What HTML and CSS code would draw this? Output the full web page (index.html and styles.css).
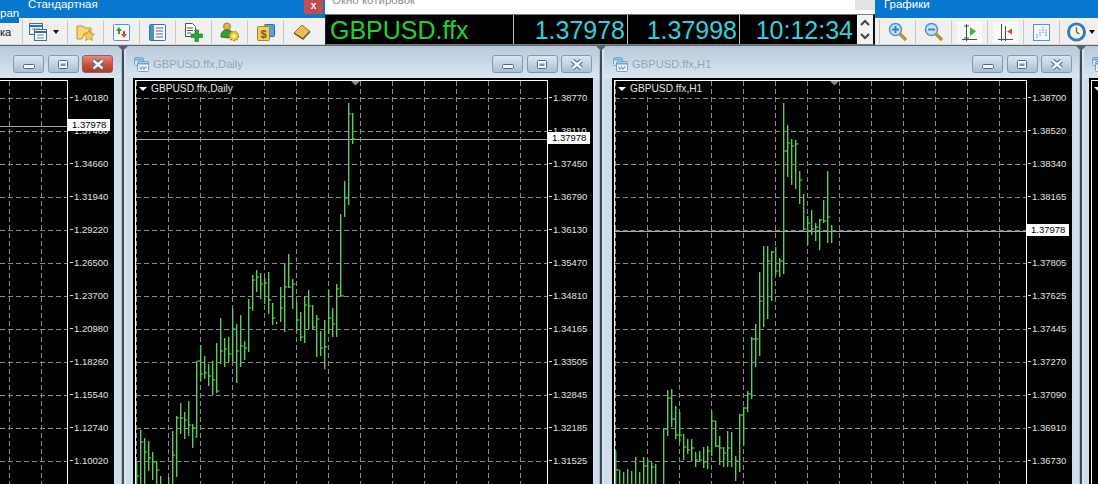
FILE: index.html
```html
<!DOCTYPE html>
<html lang="ru">
<head>
<meta charset="utf-8">
<title>MetaTrader GBPUSD.ffx</title>
<link rel="stylesheet" href="styles.css">
</head>
<body>
<svg class="defs" width="0" height="0" aria-hidden="true">
  <symbol id="win-ico" viewBox="0 0 15 15">
    <rect x=".5" y=".5" width="9" height="8" rx="1" fill="#dbe9f5" stroke="#6fa4cf"/>
    <path d="M1 2.5h8" stroke="#6fa4cf" stroke-width="2"/>
    <rect x="3.5" y="4.5" width="11" height="10" rx="1" fill="#eef5fb" stroke="#6fa4cf"/>
    <path d="M3.5 6.5h11" stroke="#6fa4cf" stroke-width="2"/>
    <path d="M5.5 9.5l1.5 3 1.5-3 1.5 3 1.5-3 1 2" fill="none" stroke="#7a9ab5"/>
  </symbol>
  <symbol id="b-min" viewBox="0 0 30 17">
    <rect x="9.5" y="8.5" width="11" height="4" rx="1" fill="#f2f6fa" stroke="#54677a"/>
  </symbol>
  <symbol id="b-max" viewBox="0 0 30 17">
    <rect x="10.5" y="4.5" width="9" height="8" rx="1" fill="#f2f6fa" stroke="#54677a"/>
    <rect x="12.5" y="7.5" width="5" height="2.5" fill="#7d93a8"/>
  </symbol>
  <symbol id="b-x" viewBox="0 0 30 17">
    <path d="M10.5 4.5l9 8M19.5 4.5l-9 8" stroke="#54677a" stroke-width="4.4"/>
    <path d="M10.5 4.5l9 8M19.5 4.5l-9 8" stroke="#f4f7fa" stroke-width="2.4"/>
  </symbol>
</svg>

<header class="top">
  <section class="bar bar-left">
    <div class="strip">
      <span class="pan">pan</span>
      <span class="strip-title strip-std">Стандартная</span>
      <span class="red-close">x</span>
    </div>
    <div class="tools">
      <span class="tool-stub">ка</span>
      <span class="tool tool-wide">
        <svg width="18" height="18" viewBox="0 0 18 18"><rect x=".5" y=".5" width="13" height="11" fill="#e8f0f8" stroke="#3f6d9c"/><path d="M1 3h12" stroke="#3f6d9c" stroke-width="2"/><rect x="5.5" y="6.5" width="12" height="11" fill="#f6f9fc" stroke="#3f6d9c"/><path d="M6 9h11" stroke="#3f6d9c" stroke-width="2"/><path d="M3 6h8M8 12h7M8 15h7" stroke="#7a8a9a"/></svg>
        <i class="drop"></i>
      </span>
      <span class="tool">
        <svg width="19" height="19" viewBox="0 0 19 19"><path d="M1 3h6l2 2h6v5H9l-3 6H1z" fill="#f3d878" stroke="#b8953a"/><path d="M13 7l1.700 3.600 3.800.5-2.800 2.600.7 3.800-3.400-1.900-3.400 1.900.7-3.800-2.800-2.600 3.800-.5z" fill="#f5cc55" stroke="#b98d2a" stroke-width=".8"/></svg>
      </span>
      <span class="tool">
        <svg width="17" height="17" viewBox="0 0 17 17"><rect x=".5" y=".5" width="16" height="16" rx="1" fill="#f4f8fb" stroke="#5d8fc0"/><path d="M6 3l3 4H7v3H5V7H3z" fill="#2f9e3a"/><path d="M11 14l-3-4h2V7h2v3h2z" fill="#d8483a"/></svg>
      </span>
      <span class="tool">
        <svg width="17" height="17" viewBox="0 0 17 17"><rect x=".5" y=".5" width="16" height="16" rx="1" fill="#f4f8fb" stroke="#3f6d9c"/><rect x="1" y="1" width="4" height="15" fill="#4a8ed0"/><path d="M7 4h7M7 7h7M7 10h7M7 13h7" stroke="#5a6a7a"/></svg>
      </span>
      <span class="tool">
        <svg width="19" height="19" viewBox="0 0 19 19"><path d="M1.500.5h7l3 3v10h-10z" fill="#fff" stroke="#555"/><path d="M3 5h6M3 7.500h6M3 10h4" stroke="#555"/><path d="M11 7h3.500v4H18.500v3.500H14.500v4H11v-4H7v-3.500h4z" fill="#2aa53a" stroke="#17752a" stroke-width=".6"/></svg>
      </span>
      <span class="tool">
        <svg width="20" height="20" viewBox="0 0 20 20"><circle cx="7" cy="4.500" r="3.500" fill="#e9b23c" stroke="#a87c20"/><path d="M1 15c0-5 2-7 6-7s5 2 5 3l-3 5z" fill="#3c9a3c" stroke="#276f27"/><circle cx="14" cy="14" r="4.500" fill="#f0d040" stroke="#a88a20" stroke-width="1.500" stroke-dasharray="2 1"/><circle cx="14" cy="14" r="1.500" fill="#fff6c8"/></svg>
      </span>
      <span class="tool">
        <svg width="18" height="18" viewBox="0 0 18 18"><rect x="7.500" y="1.500" width="10" height="12" rx="1" fill="#5aa0dc" stroke="#2d6ca8"/><rect x=".5" y="3.500" width="12" height="14" rx="1" fill="#f3cc5c" stroke="#a8842a"/><text class="dollar" x="6.500" y="15">$</text></svg>
      </span>
      <span class="tool">
        <svg width="18" height="18" viewBox="0 0 18 18"><path d="M1 10L9 2l8 6.500-7 7.500z" fill="#e8bd52" stroke="#9a7420"/><path d="M1 10l9 6 7-7.500" fill="none" stroke="#6f5414" stroke-width="1.500"/></svg>
      </span>
    </div>
  </section>

  <section class="quote">
    <div class="quote-title"><span>Окно котировок</span><i class="quote-close"></i></div>
    <div class="ticker-row">
      <div class="ticker">
        <span class="cell cell-sym">GBPUSD.ffx</span>
        <span class="cell cell-bid">1.37978</span>
        <span class="cell cell-ask">1.37998</span>
        <span class="cell cell-time">10:12:34</span>
      </div>
      <div class="spin">
        <svg width="10" height="8" viewBox="0 0 10 8"><path d="M1 6l4-4 4 4" fill="none" stroke="#444" stroke-width="2"/></svg>
        <svg width="10" height="8" viewBox="0 0 10 8"><path d="M1 2l4 4 4-4" fill="none" stroke="#444" stroke-width="2"/></svg>
      </div>
    </div>
  </section>

  <section class="bar bar-right">
    <div class="strip"><span class="strip-title strip-charts">Графики</span></div>
    <div class="tools">
      <span class="tool tool-first">
        <svg width="20" height="20" viewBox="0 0 20 20"><path d="M12 12l6 6" stroke="#b8952c" stroke-width="3.400"/><circle cx="7.500" cy="7.500" r="6" fill="#bfe0f5" stroke="#5b8fb8" stroke-width="1.500"/><path d="M4 7.500h7M7.500 4v7" stroke="#3a7fb5" stroke-width="1.800"/></svg>
      </span>
      <span class="tool">
        <svg width="20" height="20" viewBox="0 0 20 20"><path d="M12 12l6 6" stroke="#b8952c" stroke-width="3.400"/><circle cx="7.500" cy="7.500" r="6" fill="#bfe0f5" stroke="#5b8fb8" stroke-width="1.500"/><path d="M4 7.500h7" stroke="#3a7fb5" stroke-width="1.800"/></svg>
      </span>
      <span class="tool">
        <span class="toggled"><svg width="16" height="19" viewBox="0 0 16 19"><path d="M4.500 1v17M0 16.500h15M2 3h5M2 15h5" stroke="#44505c" fill="none"/><path d="M8 4l6 4.500-6 4.500z" fill="#3bb54a"/></svg></span>
      </span>
      <span class="tool">
        <span class="toggled"><svg width="16" height="19" viewBox="0 0 16 19"><path d="M3.500 1v17M7.500 3v15M0 16.500h15" stroke="#44505c" fill="none"/><path d="M9 8.500l5-3v6z" fill="#d84a3a"/></svg></span>
      </span>
      <span class="tool">
        <svg width="17" height="17" viewBox="0 0 17 17"><rect x=".5" y=".5" width="16" height="16" fill="#f4f8fb" stroke="#5d8fc0"/><path d="M4 14V9M7 12V6M10 9V3M13 12V5" stroke="#6a8aa8" stroke-dasharray="1.500 1"/></svg>
      </span>
      <span class="tool tool-clock">
        <svg width="20" height="20" viewBox="0 0 20 20"><circle cx="10" cy="10" r="8.500" fill="#f4f4ee" stroke="#2b7cc0" stroke-width="3"/><path d="M10 5v5l3 2" fill="none" stroke="#6a5a30" stroke-width="1.300"/></svg>
        <i class="drop"></i>
      </span>
    </div>
  </section>
</header>

<main class="mdi">
  <!-- left window -->
  <article class="win win-left">
    <div class="win-title">
      <div class="btns">
        <span class="btn"><svg width="30" height="17"><use href="#b-min"/></svg></span>
        <span class="btn"><svg width="30" height="17"><use href="#b-max"/></svg></span>
        <span class="btn btn-red"><svg width="30" height="17"><use href="#b-x"/></svg></span>
      </div>
    </div>
    <div class="panel panel-left">
      <div class="frame frame-left">
        <svg class="plot" width="67" height="403" viewBox="0 81 67 403">
          <path class="grid" d="M9.500 81V484M41.500 81V484M0 98.500H67M0 131.500H67M0 164.500H67M0 197.500H67M0 230.500H67M0 263.500H67M0 296.500H67M0 329.500H67M0 362.500H67M0 395.500H67M0 428.500H67M0 461.500H67"/>
          <path class="price" d="M0 126.500H67"/>
        </svg>
      </div>
      <div class="axis axis-left">
        <span>1.40180</span><span>1.37460</span><span>1.34660</span><span>1.31940</span><span>1.29220</span><span>1.26500</span><span>1.23700</span><span>1.20980</span><span>1.18260</span><span>1.15540</span><span>1.12740</span><span>1.10020</span>
        <b class="tag tag-left">1.37978</b>
      </div>
    </div>
  </article>
  <div class="split"></div>

  <!-- daily window -->
  <article class="win win-mid">
    <div class="win-title">
      <svg class="win-ico" width="15" height="15"><use href="#win-ico"/></svg>
      <span class="win-name">GBPUSD.ffx,Daily</span>
      <div class="btns">
        <span class="btn"><svg width="30" height="17"><use href="#b-min"/></svg></span>
        <span class="btn"><svg width="30" height="17"><use href="#b-max"/></svg></span>
        <span class="btn"><svg width="30" height="17"><use href="#b-x"/></svg></span>
      </div>
    </div>
    <div class="panel">
      <div class="frame">
        <span class="chart-label"><i class="tri"></i>GBPUSD.ffx,Daily</span>
        <svg class="plot" width="411" height="403" viewBox="136 81 411 403">
          <path class="grid" d="M136.500 81V484M168.500 81V484M200.500 81V484M232.500 81V484M264.500 81V484M296.500 81V484M328.500 81V484M360.500 81V484M392.500 81V484M424.500 81V484M456.500 81V484M488.500 81V484M520.500 81V484M136 98.500H547M136 131.500H547M136 164.500H547M136 197.500H547M136 230.500H547M136 263.500H547M136 296.500H547M136 329.500H547M136 362.500H547M136 395.500H547M136 428.500H547M136 461.500H547"/>
          <path class="marker" d="M351 81h9l-4.500 4.500z"/>
          <path class="price" d="M136 139.500H547"/>
          <path class="bars" d="M136.500 461V484M137 476h2M140.500 430V484M141 442h2M144.500 438V484M145 452h2M148.500 441V471M149 458h2M152.500 452V480M153 462h2M156.500 461V484M157 470h2M160.500 476V484M168.500 477V484M172.500 431V484M173 455h2M176.500 416V477M177 418h2M180.500 403V434M181 418h2M184.500 412V439M185 420h2M188.500 401V436M189 425h2M192.500 424V448M193 428h2M196.500 361V437M195 437h2M197 361h3M200.500 345V381M201 374h2M204.500 356V379M205 373h2M208.500 364V386M209 376h2M212.500 361V395M213 380h2M216.500 343V393M217 391h2M220.500 318V364M221 351h2M224.500 338V367M225 349h2M228.500 337V362M229 354h2M232.500 308V362M233 329h2M236.500 324V383M237 351h2M240.500 315V367M241 346h2M244.500 341V360M245 348h2M248.500 299V352M249 308h2M252.500 275V311M253 280h2M256.500 270V292M257 277h2M260.500 273V299M261 284h2M264.500 278V304M265 283h2M268.500 272V314M269 300h2M272.500 303V325M273 318h2M276.500 322V324M280.500 287V322M281 308h2M284.500 263V332M285 287h2M288.500 254V288M289 287h2M292.500 279V309M293 284h2M296.500 302V331M297 320h2M300.500 312V341M301 337h2M304.500 296V343M305 305h2M308.500 290V329M309 306h2M312.500 305V329M313 327h2M316.500 315V357M317 319h2M320.500 331V356M321 348h2M324.500 320V369M325 347h2M328.500 290V334M329 318h2M332.500 308V337M333 324h2M336.500 284V337M337 289h2M340.500 214V296M341 296h3M344.500 181V217M345 198h2M348.500 103V205M349 114h2M352.500 113V144M353 139h2"/>
        </svg>
      </div>
      <div class="axis">
        <span>1.38770</span><span>1.38110</span><span>1.37450</span><span>1.36790</span><span>1.36130</span><span>1.35470</span><span>1.34810</span><span>1.34165</span><span>1.33505</span><span>1.32845</span><span>1.32185</span><span>1.31525</span>
        <b class="tag tag-mid">1.37978</b>
      </div>
    </div>
  </article>
  <div class="split"></div>

  <!-- H1 window -->
  <article class="win win-right">
    <div class="win-title">
      <svg class="win-ico" width="15" height="15"><use href="#win-ico"/></svg>
      <span class="win-name">GBPUSD.ffx,H1</span>
      <div class="btns">
        <span class="btn"><svg width="30" height="17"><use href="#b-min"/></svg></span>
        <span class="btn"><svg width="30" height="17"><use href="#b-max"/></svg></span>
        <span class="btn"><svg width="30" height="17"><use href="#b-x"/></svg></span>
      </div>
    </div>
    <div class="panel">
      <div class="frame">
        <span class="chart-label"><i class="tri"></i>GBPUSD.ffx,H1</span>
        <svg class="plot" width="411" height="403" viewBox="615 81 411 403">
          <path class="grid" d="M615.500 81V484M647.500 81V484M679.500 81V484M711.500 81V484M743.500 81V484M775.500 81V484M807.500 81V484M839.500 81V484M871.500 81V484M903.500 81V484M935.500 81V484M967.500 81V484M999.500 81V484M615 98.500H1026M615 131.500H1026M615 164.500H1026M615 197.500H1026M615 230.500H1026M615 263.500H1026M615 296.500H1026M615 329.500H1026M615 362.500H1026M615 395.500H1026M615 428.500H1026M615 461.500H1026"/>
          <path class="marker" d="M830 81h9l-4.500 4.500z"/>
          <path class="price" d="M615 231.500H1026"/>
          <path class="bars" d="M615.500 451V484M616 470h3M619.500 470V484M623.500 472V484M627.500 469V484M631.500 471V484M635.500 457V484M639.500 472V484M643.500 457V484M644 466h3M647.500 459V484M651.500 462V484M652 467h2M655.500 464V484M663.500 429V484M664 429h3M667.500 390V436M668 398h3M671.500 389V427M672 419h3M675.500 406V439M676 435h3M679.500 412V442M680 435h2M683.500 434V460M684 447h2M687.500 439V454M688 450h2M691.500 439V461M692 448h2M695.500 452V467M696 460h2M699.500 451V462M700 460h2M703.500 447V468M704 462h2M707.500 446V469M708 451h2M711.500 411V456M712 421h3M715.500 421V447M716 446h3M719.500 436V465M720 448h2M723.500 447V467M724 453h2M727.500 431V467M728 448h2M731.500 432V467M735.500 456V481M736 461h2M739.500 414V472M740 415h3M743.500 407V446M744 408h3M747.500 391V412M748 394h3M751.500 337V399M752 339h3M755.500 324V367M756 339h2M759.500 272V356M760 301h2M763.500 246V327M767.500 246V319M768 261h2M771.500 251V301M772 252h2M775.500 247V275M776 271h2M779.500 258V277M780 261h3M783.500 103V274M784 151h3M787.500 125V177M788 143h2M791.500 139V185M792 146h2M795.500 140V189M796 144h2M799.500 171V204M800 180h2M803.500 194V230M804 229h2M807.500 216V245M808 223h2M811.500 210V235M812 229h2M815.500 223V241M816 227h2M819.500 219V250M820 220h2M823.500 200V223M824 221h2M827.500 171V243M828 217h2M831.500 225V243"/>
        </svg>
      </div>
      <div class="axis">
        <span>1.38700</span><span>1.38520</span><span>1.38340</span><span>1.38165</span><span>1.37985</span><span>1.37805</span><span>1.37625</span><span>1.37445</span><span>1.37270</span><span>1.37090</span><span>1.36910</span><span>1.36730</span>
        <b class="tag tag-right">1.37978</b>
      </div>
    </div>
  </article>
  <div class="split"></div>

  <!-- far right window, cut by the screen edge -->
  <article class="win win-far">
    <div class="win-title"><svg class="win-ico" width="15" height="15"><use href="#win-ico"/></svg></div>
    <div class="panel panel-far">
      <div class="frame frame-far"><i class="tri"></i></div>
    </div>
  </article>
</main>
</body>
</html>
```

FILE: styles.css
```css
* { box-sizing: border-box; }
html, body { margin: 0; height: 100%; }
body {
  width: 1098px;
  height: 484px;
  overflow: hidden;
  background: #c9d7e5;
  font-family: "Liberation Sans", Arial, sans-serif;
}
.defs { position: absolute; }
i { font-style: normal; display: block; }

/* top bars */
.top { display: flex; height: 46px; background: #5f6468; }
.bar { display: flex; flex-direction: column; height: 45px; }
.bar-left { width: 325px; position: relative; }
.bar-right { flex: 1; }
.strip {
  height: 18px;
  background: #0a77cf;
  color: #fff;
  display: flex;
  flex-shrink: 0;
}
.strip-title { font-size: 11.500px; line-height: 14px; margin-top: -3px; }
.strip-std { margin-left: 28px; }
.strip-charts { margin-left: 9px; }
.pan {
  position: absolute;
  left: 0;
  top: 8px;
  width: 19px;
  height: 15px;
  background: #0a77cf;
  color: #fff;
  font-size: 11.500px;
  line-height: 10px;
  text-align: right;
  padding-right: 1px;
}
.red-close {
  margin-left: auto;
  margin-right: 2px;
  width: 19px;
  height: 14px;
  background: #c0504f;
  color: #fff;
  font-size: 10px;
  font-weight: bold;
  line-height: 12px;
  text-align: center;
}
.tools {
  flex: 1;
  display: flex;
  background: #f0f0f0;
  align-items: stretch;
  padding-top: 2px;
  padding-bottom: 1px;
  box-shadow: inset 0 -1px 0 #d8d8d8;
}
.tool-stub {
  width: 22px;
  font-size: 11px;
  line-height: 22px;
  color: #111;
  padding-top: 1px;
}
.tool {
  width: 36px;
  border-left: 1px solid #c8c8c8;
  display: flex;
  align-items: center;
  justify-content: center;
  flex-shrink: 0;
}
.tool-wide { width: 45px; gap: 6px; padding-right: 3px; }
.tool-first { margin-left: 4px; }
.toggled {
  display: flex;
  align-items: center;
  justify-content: center;
  width: 25px;
  height: 21px;
  background: #fafafa;
}
.tool-clock { justify-content: flex-start; padding-left: 7px; gap: 3px; }
.drop {
  width: 0;
  height: 0;
  border-left: 3.500px solid transparent;
  border-right: 3.500px solid transparent;
  border-top: 4px solid #111;
  flex-shrink: 0;
}
.dollar { font: bold 11px "Liberation Sans", sans-serif; fill: #7a5a10; text-anchor: middle; }

/* quote window */
.quote { width: 550px; background: #fff; display: flex; flex-direction: column; height: 45px; position: relative; }
.quote-title { height: 14px; position: relative; overflow: hidden; flex-shrink: 0; }
.quote-title span {
  position: absolute;
  left: 7px;
  top: -7px;
  font-size: 11.500px;
  line-height: 14px;
  color: #8e8e8e;
}
.quote-close { position: absolute; right: 0; top: 0; width: 20px; height: 10px; background: #e4e4e4; }
.ticker-row { flex: 1; display: flex; border-top: 1px solid #7a7a7a; border-bottom: 1px solid #7a7a7a; border-left: 1px solid #222; border-right: 2px solid #111; }
.ticker { display: flex; width: 531px; background: #000; }
.cell {
  font-size: 25px;
  line-height: 28px;
  padding-top: 1px;
  color: #35cfdc;
  text-align: right;
  border-left: 1px solid #c0c0c0;
  white-space: nowrap;
}
.cell-sym { width: 187px; border-left: 0; color: #23d12f; text-align: left; padding-left: 4px; }
.cell-bid { width: 114px; padding-right: 2px; }
.cell-ask { width: 112px; padding-right: 2px; }
.cell-time { width: 118px; padding-right: 4px; }
.spin { flex: 1; display: flex; flex-direction: column; align-items: center; justify-content: space-evenly; background: #f2f2f2; }

/* MDI area */
.mdi { display: flex; height: 438px; overflow: hidden; }
.win {
  flex-shrink: 0;
  height: 438px;
  display: flex;
  flex-direction: column;
  background: #d0deec;
}
.win-left { width: 121px; padding-right: 7px; }
.win-mid { width: 473px; padding: 0 6px 0 7px; }
.win-right { width: 475px; padding: 0 7px 0 8px; }
.win-far { flex: 1; padding-left: 5px; min-width: 0; flex-shrink: 1; }
.split {
  width: 5px;
  flex-shrink: 0;
  position: relative;
  background: #dbe5ef;
  border-left: 1px solid #aebccb;
}
.split::before {
  content: "";
  display: block;
  width: 2px;
  height: 100%;
  background: #3f4a55;
}
.split::after {
  content: "";
  position: absolute;
  top: 0;
  left: -4px;
  border-left: 5px solid transparent;
  border-right: 5px solid transparent;
  border-top: 5px solid #5a636c;
}
.win-title {
  height: 32px;
  flex-shrink: 0;
  display: flex;
  align-items: flex-start;
  padding-top: 9px;
  background: linear-gradient(#b9cadb, #dae6f1);
}
.win-left .win-title { margin-right: -7px; padding-left: 13px; padding-right: 8px; }
.win-far .win-title { margin-left: -5px; padding-left: 8px; overflow: hidden; }
.win-mid .win-title { margin: 0 -6px 0 -7px; padding-left: 8px; padding-right: 7px; }
.win-right .win-title { margin: 0 -7px 0 -8px; padding-left: 9px; padding-right: 7px; }
.win-ico { margin-top: 2px; flex-shrink: 0; }
.win-name { font-size: 11.200px; line-height: 18px; color: #98a3ae; margin-left: 4px; }
.btns { display: flex; gap: 3.500px; margin-left: auto; }
.btn {
  width: 31px;
  height: 18px;
  border: 1px solid #8099af;
  border-radius: 3px;
  background: linear-gradient(#dbe6f1 0%, #c3d3e3 50%, #aabfd3 100%);
  display: flex;
  align-items: center;
  justify-content: center;
}
.btn-red { border-color: #a85a50; background: linear-gradient(#e2897c 0%, #c6523f 55%, #a93a2a 100%); }
.btn svg { display: block; flex-shrink: 0; }

/* chart panels */
.panel {
  flex: 1;
  background: #000;
  display: flex;
  padding: 2px 0 0 2px;
  overflow: hidden;
}
.panel-left { padding-left: 0; }
.frame {
  position: relative;
  width: 413px;
  flex-shrink: 0;
  border: 1px solid #fff;
  border-bottom: 0;
  height: 420px;
  background: #000;
}
.frame-left { width: 68px; border-left: 0; }
.frame-far { flex: 1; flex-shrink: 1; border-right: 0; }
.plot { display: block; }
.grid { fill: none; stroke: #8a8a8a; stroke-width: 1; stroke-dasharray: 5 3; }
.price { fill: none; stroke: #a9a9a9; stroke-width: 1; }
.bars { fill: none; stroke: #62c862; stroke-width: 1; filter: drop-shadow(1px 0 0 rgba(60, 180, 60, .45)); }
.marker { fill: #8a8a8a; }
.chart-label {
  position: absolute;
  left: 3px;
  top: 0;
  display: flex;
  align-items: center;
  font-size: 10.200px;
  line-height: 15px;
  color: #e4e4e4;
  background: #000;
  padding-right: 1px;
  z-index: 1;
}
.tri {
  width: 0;
  height: 0;
  border-left: 4px solid transparent;
  border-right: 4px solid transparent;
  border-top: 4px solid #fff;
  margin-right: 4px;
}
.frame-far .tri { margin: 6px 0 0 2px; }
.axis {
  position: relative;
  flex: 1;
  padding-top: 1px;
  display: flex;
  flex-direction: column;
  font-size: 9.500px;
  color: #e2e2e2;
}
.axis span {
  display: flex;
  align-items: center;
  height: 33px;
  flex-shrink: 0;
  padding-left: 1px;
  gap: 1px;
}
.axis span::before {
  content: "";
  width: 3px;
  height: 1px;
  background: #d8d8d8;
}
.axis-left span { padding-left: 2px; }
.tag {
  position: absolute;
  left: 0;
  width: 42px;
  height: 12px;
  background: #fff;
  color: #000;
  font-weight: normal;
  font-size: 9.500px;
  line-height: 12px;
  padding-left: 4px;
}
.tag-left { top: 39px; }
.tag-mid { top: 52px; }
.tag-right { top: 144px; }
```
